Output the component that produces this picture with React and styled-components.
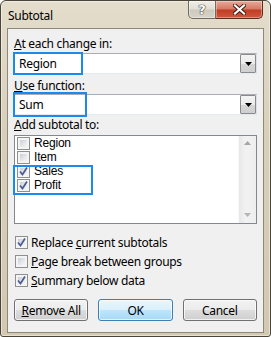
import React from 'react';
import styled, { createGlobalStyle } from 'styled-components';

const GlobalStyle = createGlobalStyle`
  html, body { margin: 0; padding: 0; background: #ffffff; }
  body {
    font-family: "Noto Sans", "Liberation Sans", sans-serif;
    font-size: 12px;
    color: #000;
  }
`;

const Window = styled.div`
  width: 271px;
  height: 337px;
  box-sizing: border-box;
  border: 1px solid #4a4538;
  border-radius: 6px 6px 3px 3px;
  background: linear-gradient(#e4ddcc, #d8cfba 40%, #d3c9b1);
  box-shadow: inset 0 0 0 1px rgba(255,255,255,0.45);
  padding: 0 6px 3px 6px;
  display: flex;
  flex-direction: column;
`;

const TitleBar = styled.div`
  height: 27px;
  display: flex;
  align-items: flex-start;
  flex-shrink: 0;
`;

const Title = styled.div`
  padding: 7px 0 0 1px;
  line-height: 15px;
  letter-spacing: -0.3px;
  flex: 1;
`;

const CaptionButtons = styled.div`
  display: flex;
  margin-right: 1px;
  height: 18px;
`;

const CaptionButton = styled.div`
  height: 18px;
  width: ${p => p.$w}px;
  box-sizing: border-box;
  display: flex;
  align-items: center;
  justify-content: center;
  border: 1px solid ${p => (p.$close ? '#5e2a20' : '#6f6b60')};
  border-top: none;
  border-left: ${p => (p.$close ? 'none' : undefined)};
  border-radius: ${p => (p.$close ? '0 0 5px 0' : '0 0 0 5px')};
  background: ${p =>
    p.$close
      ? 'linear-gradient(#e9a99a, #d77a66 45%, #c13d23 55%, #d0583f)'
      : 'linear-gradient(#f1efea, #e1ded5 45%, #cdc9bc 55%, #d8d4c9)'};
  box-shadow: inset 0 0 0 1px rgba(255,255,255,0.35);
`;

const HelpGlyph = styled.span`
  font-family: "DejaVu Sans", sans-serif;
  font-weight: bold;
  font-size: 13px;
  line-height: 13px;
  color: #fff;
  text-shadow: 0 0 1px #333, 0 0 1px #333, 0 0 1px #333;
`;

const Client = styled.div`
  flex: 1;
  border: 1px solid #8e887a;
  background: #f0f0f0;
  padding: 0 6px;
  display: flex;
  flex-direction: column;
`;

const Label = styled.div`
  line-height: 15px;
  margin-top: ${p => p.$mt}px;
  letter-spacing: -0.3px;
`;

const Combo = styled.div`
  position: relative;
  height: 21px;
  box-sizing: border-box;
  margin-top: ${p => p.$mt}px;
  border: 1px solid #abadb3;
  border-color: #abadb3 #dbdfe6 #e3e9ef #e2e3ea;
  background: #fff;
  display: flex;
  align-items: center;
  padding-left: 4px;
  letter-spacing: -0.3px;
`;

const ComboText = styled.span`
  flex: 1;
  line-height: 15px;
`;

const DropButton = styled.div`
  width: 16px;
  height: 19px;
  box-sizing: border-box;
  border: 1px solid #8a8a8a;
  border-radius: 1px;
  background: linear-gradient(#f3f3f3, #ebebeb 50%, #d6d6d6 51%, #cfcfcf);
  display: flex;
  align-items: center;
  justify-content: center;
`;

const Highlight = styled.div`
  position: absolute;
  left: ${p => p.$l}px;
  top: ${p => p.$t}px;
  width: ${p => p.$w}px;
  height: ${p => p.$h}px;
  box-sizing: border-box;
  border: 2px solid #1a8af0;
  pointer-events: none;
`;

const List = styled.div`
  position: relative;
  margin-top: 3px;
  height: 89px;
  box-sizing: border-box;
  border: 1px solid #828790;
  background: #fff;
  display: flex;
`;

const ListItems = styled.div`
  flex: 1;
  display: flex;
  flex-direction: column;
  padding-left: 2px;
`;

const ListRow = styled.div`
  height: 14px;
  display: flex;
  align-items: center;
  gap: 4px;
  font-family: "Liberation Sans", Arial, sans-serif;
  font-size: 12px;
  line-height: 14px;
  letter-spacing: -0.2px;
`;

const ScrollBar = styled.div`
  width: 17px;
  background: linear-gradient(90deg, #e8e8e8, #f2f2f2 40%, #eeeeee);
  border-left: 1px solid #f8f8f8;
  display: flex;
  flex-direction: column;
  justify-content: space-between;
  align-items: center;
  padding: 5px 0 6px;
`;

const Box = styled.span`
  width: 13px;
  height: 13px;
  box-sizing: border-box;
  border: 1px solid #8e8f8f;
  background: #f4f4f4;
  padding: 2px;
  display: inline-flex;
  flex-shrink: 0;
`;

const BoxInner = styled.span`
  flex: 1;
  background: linear-gradient(135deg, #cbcfd5, #e6e8eb 60%, #f6f6f6);
  position: relative;
`;

const CheckMark = styled.svg`
  position: absolute;
  left: -2px;
  top: -2px;
`;

const Options = styled.div`
  margin-top: 9px;
  display: flex;
  flex-direction: column;
  padding-left: 1px;
`;

const OptionRow = styled.div`
  height: 19px;
  display: flex;
  align-items: center;
  gap: 3px;
  letter-spacing: -0.3px;
`;

const ButtonRow = styled.div`
  margin-top: 9px;
  display: flex;
  gap: 10px;
`;

const Button = styled.div`
  width: 75px;
  height: 22px;
  box-sizing: border-box;
  border: 1px solid ${p => (p.$default ? '#3c7fb1' : '#707070')};
  border-radius: 3px;
  background: ${p =>
    p.$default
      ? 'linear-gradient(#eaf6fd, #d9f0fc 50%, #bee6fd 51%, #a7d9f5)'
      : 'linear-gradient(#f2f2f2, #ebebeb 50%, #dddddd 51%, #cfcfcf)'};
  box-shadow: inset 0 0 0 1px rgba(255,255,255,0.7);
  display: flex;
  align-items: center;
  justify-content: center;
  line-height: 15px;
  letter-spacing: -0.3px;
`;

const Arrow = ({ color = '#000', up = false, w = 7 }) => (
  <svg width={w} height="4" viewBox="0 0 7 4">
    <path d={up ? 'M0 4 L3.5 0 L7 4 Z' : 'M0 0 L7 0 L3.5 4 Z'} fill={color} />
  </svg>
);

const CheckBox = ({ checked }) => (
  <Box>
    <BoxInner>
      {checked && (
        <CheckMark width="11" height="11" viewBox="0 0 11 11">
          <path d="M2 5.5 L4.5 8.5 L9 1.5" fill="none" stroke="#4a5d93" strokeWidth="1.7" />
        </CheckMark>
      )}
    </BoxInner>
  </Box>
);

const fields = [
  { name: 'Region', checked: false },
  { name: 'Item', checked: false },
  { name: 'Sales', checked: true },
  { name: 'Profit', checked: true },
];

export default function App() {
  return (
    <>
      <GlobalStyle />
      <Window>
        <TitleBar>
          <Title>Subtotal</Title>
          <CaptionButtons>
            <CaptionButton $w={28}>
              <HelpGlyph>?</HelpGlyph>
            </CaptionButton>
            <CaptionButton $w={47} $close>
              <svg width="13" height="11" viewBox="0 0 13 11">
                <path d="M2 1.5 L11 9.5 M11 1.5 L2 9.5" stroke="#3a1a14" strokeWidth="4" strokeLinecap="square" />
                <path d="M2 1.5 L11 9.5 M11 1.5 L2 9.5" stroke="#ffffff" strokeWidth="2.2" strokeLinecap="square" />
              </svg>
            </CaptionButton>
          </CaptionButtons>
        </TitleBar>
        <Client>
          <Label $mt={7}><u>A</u>t each change in:</Label>
          <Combo $mt={2}>
            <ComboText>Region</ComboText>
            <DropButton><Arrow /></DropButton>
            <Highlight $l={-2} $t={-2} $w={70} $h={23} />
          </Combo>
          <Label $mt={4}><u>U</u>se function:</Label>
          <Combo $mt={1}>
            <ComboText>Sum</ComboText>
            <DropButton><Arrow /></DropButton>
            <Highlight $l={-2} $t={-3} $w={74} $h={25} />
          </Combo>
          <Label $mt={2}><u>A</u>dd subtotal to:</Label>
          <List>
            <ListItems>
              {fields.map(f => (
                <ListRow key={f.name}>
                  <CheckBox checked={f.checked} />
                  <span>{f.name}</span>
                </ListRow>
              ))}
            </ListItems>
            <ScrollBar>
              <Arrow up color="#a5a5a5" />
              <Arrow color="#b5b5b5" />
            </ScrollBar>
            <Highlight $l={-2} $t={29} $w={80} $h={30} />
          </List>
          <Options>
            <OptionRow><CheckBox checked /><span>Replace <u>c</u>urrent subtotals</span></OptionRow>
            <OptionRow><CheckBox /><span><u>P</u>age break between groups</span></OptionRow>
            <OptionRow><CheckBox checked /><span><u>S</u>ummary below data</span></OptionRow>
          </Options>
          <ButtonRow>
            <Button><span><u>R</u>emove All</span></Button>
            <Button $default>OK</Button>
            <Button>Cancel</Button>
          </ButtonRow>
        </Client>
      </Window>
    </>
  );
}
